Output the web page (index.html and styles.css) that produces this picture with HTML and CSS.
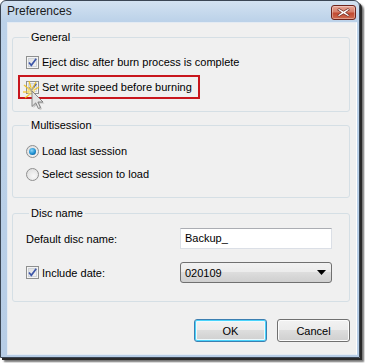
FILE: index.html
```html
<!DOCTYPE html>
<html>
<head>
<meta charset="utf-8">
<link rel="stylesheet" href="styles.css">
</head>
<body>
<div class="window">
  <div class="titlebar">
    <span class="title">Preferences</span>
    <button class="close" aria-label="Close">
      <svg width="13" height="9" viewBox="0 0 13 9"><path d="M2 0.5 L6.5 3.2 L11 0.5 L12.5 1.8 L8.6 4.5 L12.5 7.2 L11 8.5 L6.5 5.8 L2 8.5 L0.5 7.2 L4.4 4.5 L0.5 1.8 Z" fill="#fff" stroke="#6a2a22" stroke-width="0.8"/></svg>
    </button>
  </div>
  <div class="client">
    <fieldset class="group g-general">
      <legend>General</legend>
      <label class="row">
        <span class="check"><svg width="13" height="13" viewBox="0 0 13 13"><path d="M3 6.5 L5.3 9.3 L10.2 2.8" fill="none" stroke="#3d56a8" stroke-width="1.7"/></svg></span>
        <span>Eject disc after burn process is complete</span>
      </label>
      <label class="row highlighted">
        <span class="check"><svg width="13" height="13" viewBox="0 0 13 13"><path d="M3 6.5 L5.3 9.3 L10.2 2.8" fill="none" stroke="#3d56a8" stroke-width="1.7"/></svg></span>
        <span>Set write speed before burning</span>
      </label>
    </fieldset>
    <fieldset class="group g-multi">
      <legend>Multisession</legend>
      <label class="row">
        <span class="radio on"><span class="dot"></span></span>
        <span>Load last session</span>
      </label>
      <label class="row row2">
        <span class="radio"></span>
        <span>Select session to load</span>
      </label>
    </fieldset>
    <fieldset class="group g-disc">
      <legend>Disc name</legend>
      <div class="field">
        <span class="flabel">Default disc name:</span>
        <div class="textbox">Backup_</div>
      </div>
      <div class="field field2">
        <label class="row">
          <span class="check"><svg width="13" height="13" viewBox="0 0 13 13"><path d="M3 6.5 L5.3 9.3 L10.2 2.8" fill="none" stroke="#3d56a8" stroke-width="1.7"/></svg></span>
          <span>Include date:</span>
        </label>
        <div class="combo"><span>020109</span>
          <svg width="9" height="5" viewBox="0 0 9 5"><path d="M0 0 H9 L4.5 5 Z" fill="#000"/></svg>
        </div>
      </div>
    </fieldset>
    <div class="buttons">
      <button class="btn default">OK</button>
      <button class="btn">Cancel</button>
    </div>
  </div>
  <svg class="cursor" width="26" height="30" viewBox="0 0 26 30">
    <g stroke="#f3c21a" stroke-width="1.3" opacity="0.9">
      <path d="M7 9 L1 4"/><path d="M8 7 L6 0"/><path d="M10 7 L13 1"/><path d="M6 11 L0 11"/><path d="M7 13 L2 17"/><path d="M11 9 L16 6"/>
    </g>
    <circle cx="8" cy="10" r="4" fill="#fbe27a" opacity="0.6"/>
    <path d="M10.5 11.5 L10.5 27 L14.2 23.4 L16.8 29 L19 28 L16.4 22.5 L21.5 22.5 Z" fill="rgba(0,0,0,0.18)"/>
    <path d="M9 10 L9 25.5 L12.7 21.9 L15.3 27.5 L17.5 26.5 L14.9 21 L20 21 Z" fill="#e4e4e4" stroke="#7a7a7a" stroke-width="0.9" stroke-linejoin="round"/>
  </svg>
</div>
</body>
</html>
```
FILE: styles.css
```css
html, body {
  margin: 0;
  padding: 0;
  background: #ffffff;
}
body {
  width: 365px;
  height: 363px;
  overflow: hidden;
  font-family: "Liberation Sans", Arial, sans-serif;
  font-size: 11px;
  color: #000;
}
.window {
  position: relative;
  border: 1px solid #3b4654;
  border-radius: 6px 6px 0 0;
  background: linear-gradient(#d3e2f1, #bcd2e9 20px, #b7cde6);
  box-shadow: 2px 2px 0 #2a2a2a, 4px 4px 2px rgba(0,0,0,0.55);
  display: flex;
  flex-direction: column;
  padding: 0 2px 2px 6px;
  box-sizing: border-box;
  width: 360px;
  height: 358px;
}
.titlebar {
  height: 21px;
  display: flex;
  align-items: center;
  justify-content: space-between;
  flex: none;
}
.title {
  font-size: 12px;
  color: #1b1b1b;
  margin-top: -1px;
}
.close {
  width: 25px;
  height: 15px;
  margin-right: 1px;
  margin-top: 1px;
  padding: 0;
  border: 1px solid #6d231b;
  border-radius: 3px;
  background: linear-gradient(#e7a596, #d7806b 45%, #c24a31 55%, #cf6b4f);
  box-shadow: inset 0 0 0 1px rgba(255,255,255,0.35);
  display: flex;
  align-items: center;
  justify-content: center;
}
.client {
  flex: 1;
  background: #f0f0f0;
  border: 1px solid #e4ebf3;
  border-right-color: #ffffff;
  padding: 7px 6px 0 4px;
  display: flex;
  flex-direction: column;
}
.group {
  margin: 0;
  border: 1px solid #d5dfe5;
  border-radius: 3px;
  padding: 0 0 0 13px;
  min-width: 0;
}
.group legend {
  padding: 0 2px;
  margin-left: 3px;
  line-height: 15px;
}
.g-general { padding-top: 8px; padding-bottom: 12px; }
.g-multi { margin-top: 6px; padding-top: 9px; padding-bottom: 14px; }
.g-disc { margin-top: 8px; padding-top: 7px; padding-bottom: 18px; padding-left: 13px; }
.row {
  display: flex;
  align-items: center;
  gap: 3px;
  height: 18px;
}
.row2 { margin-top: 5px; }
.highlighted {
  width: fit-content;
  border: 2px solid #c8161d;
  margin-left: -8px;
  margin-top: 4px;
  padding: 1px 6px;
}
.check {
  width: 11px;
  height: 11px;
  border: 1px solid #8e8f8f;
  background: linear-gradient(135deg, #dcdcdc, #f6f6f6);
  box-shadow: inset 0 0 0 1px #f4f4f4, inset 0 0 0 2px #cfd3d9;
  position: relative;
  flex: none;
}
.check svg {
  position: absolute;
  left: -1px;
  top: -1px;
}
.radio {
  width: 11px;
  height: 11px;
  border: 1px solid #8f8f8f;
  border-radius: 50%;
  background: radial-gradient(circle at 60% 65%, #f8f8f8, #dadada);
  display: flex;
  align-items: center;
  justify-content: center;
  flex: none;
}
.dot {
  width: 7px;
  height: 7px;
  border-radius: 50%;
  background: radial-gradient(circle at 40% 35%, #8fd6f8, #1c8fd0 55%, #0a3f78);
}
.field {
  display: flex;
  align-items: center;
  justify-content: space-between;
  padding-right: 17px;
}
.field2 { margin-top: 13px; }
.textbox {
  height: 19px;
  border: 1px solid #dbdfe6;
  border-top-color: #abadb3;
  background: #fff;
  padding: 0 0 0 4px;
  width: 146px;
  line-height: 19px;
}
.combo {
  height: 19px;
  border: 1px solid #707070;
  border-radius: 3px;
  background: linear-gradient(#f2f2f2, #ebebeb 50%, #dddddd 50%, #cfcfcf);
  display: flex;
  align-items: center;
  justify-content: space-between;
  padding: 0 5px 0 4px;
  width: 141px;
}
.buttons {
  display: flex;
  justify-content: flex-end;
  gap: 10px;
  margin-top: 17px;
}
.btn {
  width: 73px;
  height: 23px;
  border: 1px solid #707070;
  border-radius: 3px;
  background: linear-gradient(#f2f2f2, #ebebeb 50%, #dddddd 50%, #cfcfcf);
  box-shadow: inset 0 0 0 1px #fcfcfc;
  font-family: inherit;
  font-size: 11px;
  color: #000;
  padding: 0;
}
.btn.default {
  border-color: #3c7fb1;
  box-shadow: inset 0 0 0 1px #48d3fb, inset 0 0 0 2px #eef9fd;
}
.cursor {
  position: absolute;
  left: 22px;
  top: 80px;
  pointer-events: none;
}
```
